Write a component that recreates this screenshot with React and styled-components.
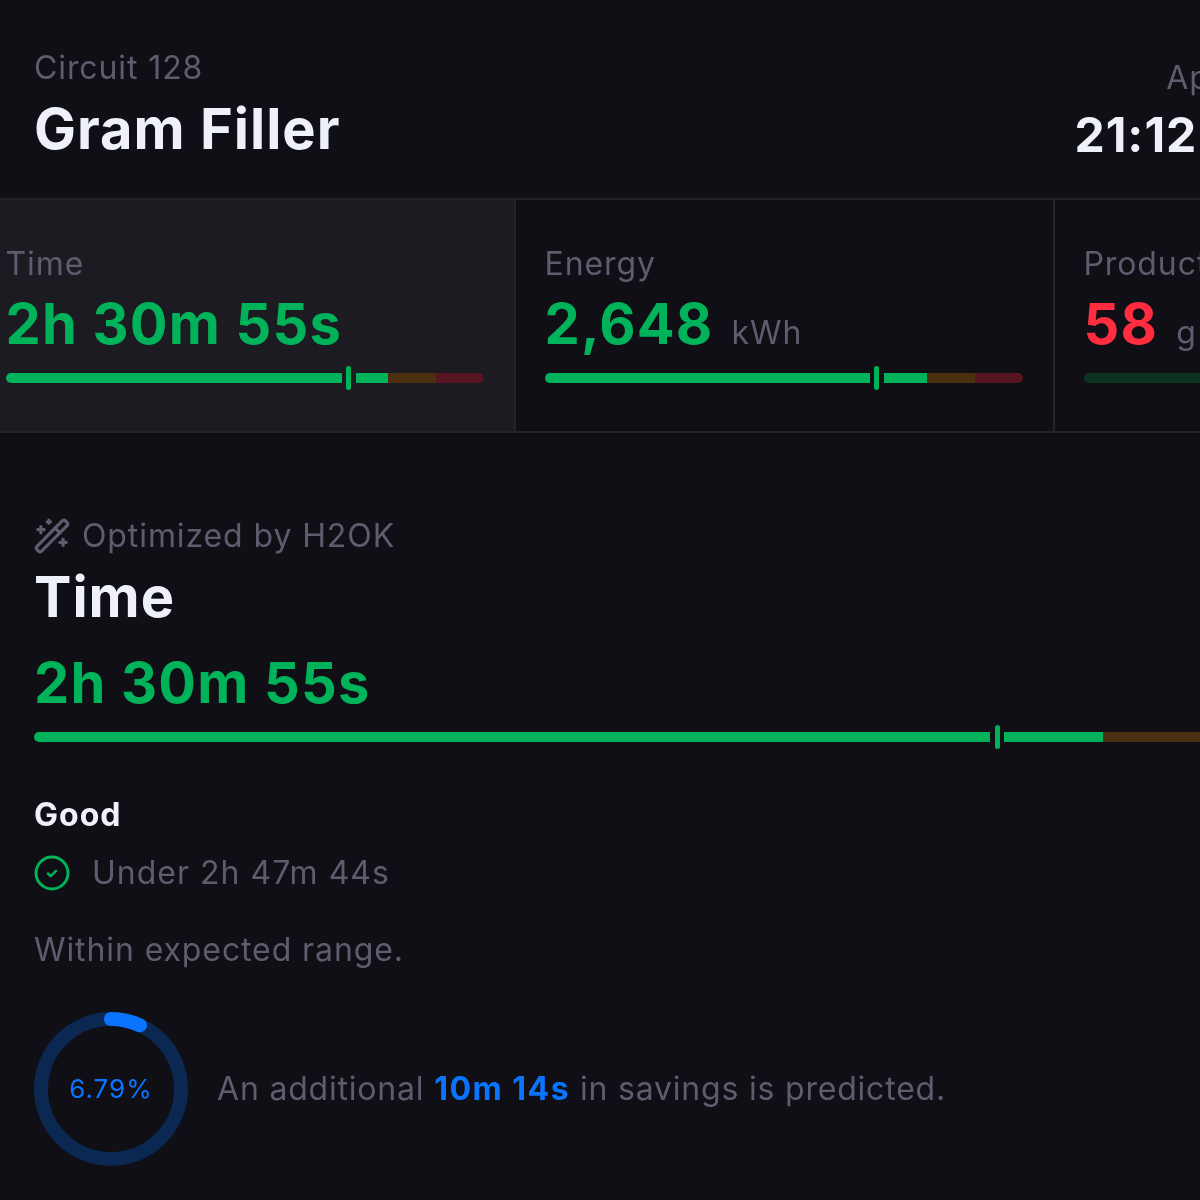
import React from "react"
import styled, { createGlobalStyle } from "styled-components"
import { WandSparkles } from "lucide-react"

const GlobalStyle = createGlobalStyle`
  html, body {
    margin: 0;
    height: 100%;
    overflow: hidden;
    background: #100f15;
  }
  #root {
    width: 1200px;
    height: 1200px;
    overflow: hidden;
  }
`

const Page = styled.div`
  width: 1404px;
  height: 1200px;
  background: #100f15;
  color: #eef0fa;
  font-family: Inter, "Liberation Sans", sans-serif;
  letter-spacing: 0.9px;
  filter: blur(0.5px);
`

const Header = styled.header`
  height: 198px;
  box-sizing: border-box;
  padding: 48px 34px 0;
  display: flex;
  justify-content: space-between;
`

const Label = styled.div`
  font-size: 32px;
  line-height: 40px;
  color: #5e5c6e;
`

const Title = styled.h1`
  margin: 11px 0 0;
  font-size: 56px;
  line-height: 60px;
  font-weight: 700;
  letter-spacing: 1px;
`

const DateBlock = styled.div`
  text-align: right;
  padding-top: 10px;
`

const Clock = styled.div`
  font-size: 48px;
  line-height: 56px;
  font-weight: 700;
  letter-spacing: 1px;
  margin-top: 9px;
`

const Strip = styled.section`
  display: flex;
  height: 235px;
  margin-left: -23px;
  border-top: 2px solid #24232a;
  border-bottom: 2px solid #24232a;
  box-sizing: border-box;
`

const Tile = styled.div`
  width: 539px;
  flex: none;
  box-sizing: border-box;
  padding: 44px 30.5px 0 28.5px;
  background: ${p => (p.$active ? "#1c1b22" : "transparent")};
  border-right: 2px solid #24232a;
`

const Value = styled.div`
  font-size: 56px;
  line-height: 64px;
  font-weight: 700;
  letter-spacing: 1.2px;
  margin-top: 8px;
  color: ${p => p.$color};
`

const Unit = styled.span`
  font-size: 32px;
  line-height: 1;
  font-weight: 400;
  letter-spacing: 0.9px;
  color: #5e5c6e;
  margin-left: 18px;
`

const Track = styled.div`
  position: relative;
  display: flex;
  height: 10px;
  margin-top: ${p => p.$top}px;
`

const Segment = styled.div`
  flex: ${p => p.$size};
  background: ${p => p.$color};
  &:nth-child(1) {
    border-radius: 5px 0 0 5px;
  }
  &:nth-child(3) {
    border-radius: 0 5px 5px 0;
  }
`

const Marker = styled.div`
  position: absolute;
  top: -7px;
  width: 5px;
  height: 24px;
  margin-left: -2.5px;
  background: #00b259;
  border-radius: 2.5px;
`

const MarkerGap = styled.div`
  position: absolute;
  top: 0;
  width: 14px;
  height: 10px;
  margin-left: -7px;
  background: ${p => p.$gap};
`

const Details = styled.section`
  padding: 83px 34px 0;
`

const Optimized = styled.div`
  display: flex;
  align-items: center;
  gap: 11px;
  font-size: 32px;
  line-height: 40px;
  color: #5e5c6e;
  svg {
    margin-left: -1px;
  }
`

const SectionTitle = styled.h2`
  margin: 9px 0 22px;
  font-size: 56px;
  line-height: 64px;
  font-weight: 700;
  letter-spacing: 1px;
`

const StatusName = styled.div`
  margin-top: 53px;
  font-size: 32px;
  line-height: 40px;
  font-weight: 700;
  letter-spacing: 1px;
`

const Rule = styled.div`
  display: flex;
  align-items: center;
  gap: 22px;
  margin-top: 18px;
  font-size: 32px;
  line-height: 40px;
  letter-spacing: 1px;
  color: #5e5c6e;
`

const Note = styled.div`
  margin-top: 37px;
  font-size: 32px;
  line-height: 40px;
  color: #5e5c6e;
`

const Savings = styled.div`
  display: flex;
  align-items: center;
  gap: 28px;
  margin: 41px 0 0 -1px;
  font-size: 32px;
  line-height: 40px;
  letter-spacing: 0.8px;
  color: #5e5c6e;
`

const Ring = styled.div`
  position: relative;
  width: 156px;
  height: 156px;
  flex: none;
`

const RingLabel = styled.div`
  position: absolute;
  inset: 0;
  display: flex;
  align-items: center;
  justify-content: center;
  font-size: 26px;
  letter-spacing: 1px;
  color: #0a74ff;
`

const Highlight = styled.b`
  font-weight: 700;
  letter-spacing: 1.5px;
  color: #0a74ff;
`

const Meter = ({ top, mark, gap, dim }) => (
  <Track $top={top}>
    <Segment $size={80} $color={dim ? "#0b3320" : "#00b259"} />
    <Segment $size={10} $color="#4a2f10" />
    <Segment $size={10} $color="#561520" />
    {mark != null && (
      <>
        <MarkerGap $gap={gap} style={{ left: `${mark}%` }} />
        <Marker style={{ left: `${mark}%` }} />
      </>
    )}
  </Track>
)

const CheckCircle = () => (
  <svg width="36" height="36" viewBox="0 0 36 36" fill="none" stroke="#00b259">
    <circle cx="18" cy="18" r="16" strokeWidth="3" />
    <path d="M14 18.5l2.7 2.7 5.3-5.4" strokeWidth="2.5" strokeLinecap="round" strokeLinejoin="round" />
  </svg>
)

const circumference = 2 * Math.PI * 70

const Progress = ({ percent }) => (
  <Ring>
    <svg width="156" height="156" viewBox="0 0 156 156" fill="none">
      <circle cx="78" cy="78" r="70" stroke="#0b2852" strokeWidth="14" />
      <circle
        cx="78"
        cy="78"
        r="70"
        stroke="#0a74ff"
        strokeWidth="14"
        strokeLinecap="round"
        strokeDasharray={`${(circumference * percent) / 100} ${circumference}`}
        transform="rotate(-90 78 78)"
      />
    </svg>
    <RingLabel>{percent}%</RingLabel>
  </Ring>
)

export default function App() {
  return (
    <Page>
      <GlobalStyle />
      <Header>
        <div>
          <Label>Circuit 128</Label>
          <Title>Gram Filler</Title>
        </div>
        <DateBlock>
          <Label>Apr 12, 2024</Label>
          <Clock>21:12:34 PM</Clock>
        </DateBlock>
      </Header>
      <Strip>
        <Tile $active>
          <Label>Time</Label>
          <Value $color="#00b259">2h 30m 55s</Value>
          <Meter top={17} mark={71.8} gap="#1c1b22" />
        </Tile>
        <Tile>
          <Label>Energy</Label>
          <Value $color="#00b259">
            2,648<Unit>kWh</Unit>
          </Value>
          <Meter top={17} mark={69.5} gap="#100f15" />
        </Tile>
        <Tile>
          <Label>Production</Label>
          <Value $color="#ff2d3f">
            58<Unit>g</Unit>
          </Value>
          <Meter top={17} dim />
        </Tile>
      </Strip>
      <Details>
        <Optimized>
          <WandSparkles size={38} strokeWidth={2} />
          Optimized by H2OK
        </Optimized>
        <SectionTitle>Time</SectionTitle>
        <Value $color="#00b259">2h 30m 55s</Value>
        <Meter top={17} mark={72.1} gap="#100f15" />
        <StatusName>Good</StatusName>
        <Rule>
          <CheckCircle />
          Under 2h 47m 44s
        </Rule>
        <Note>Within expected range.</Note>
        <Savings>
          <Progress percent={6.79} />
          <span>
            An additional <Highlight>10m 14s</Highlight> in savings is predicted.
          </span>
        </Savings>
      </Details>
    </Page>
  )
}
